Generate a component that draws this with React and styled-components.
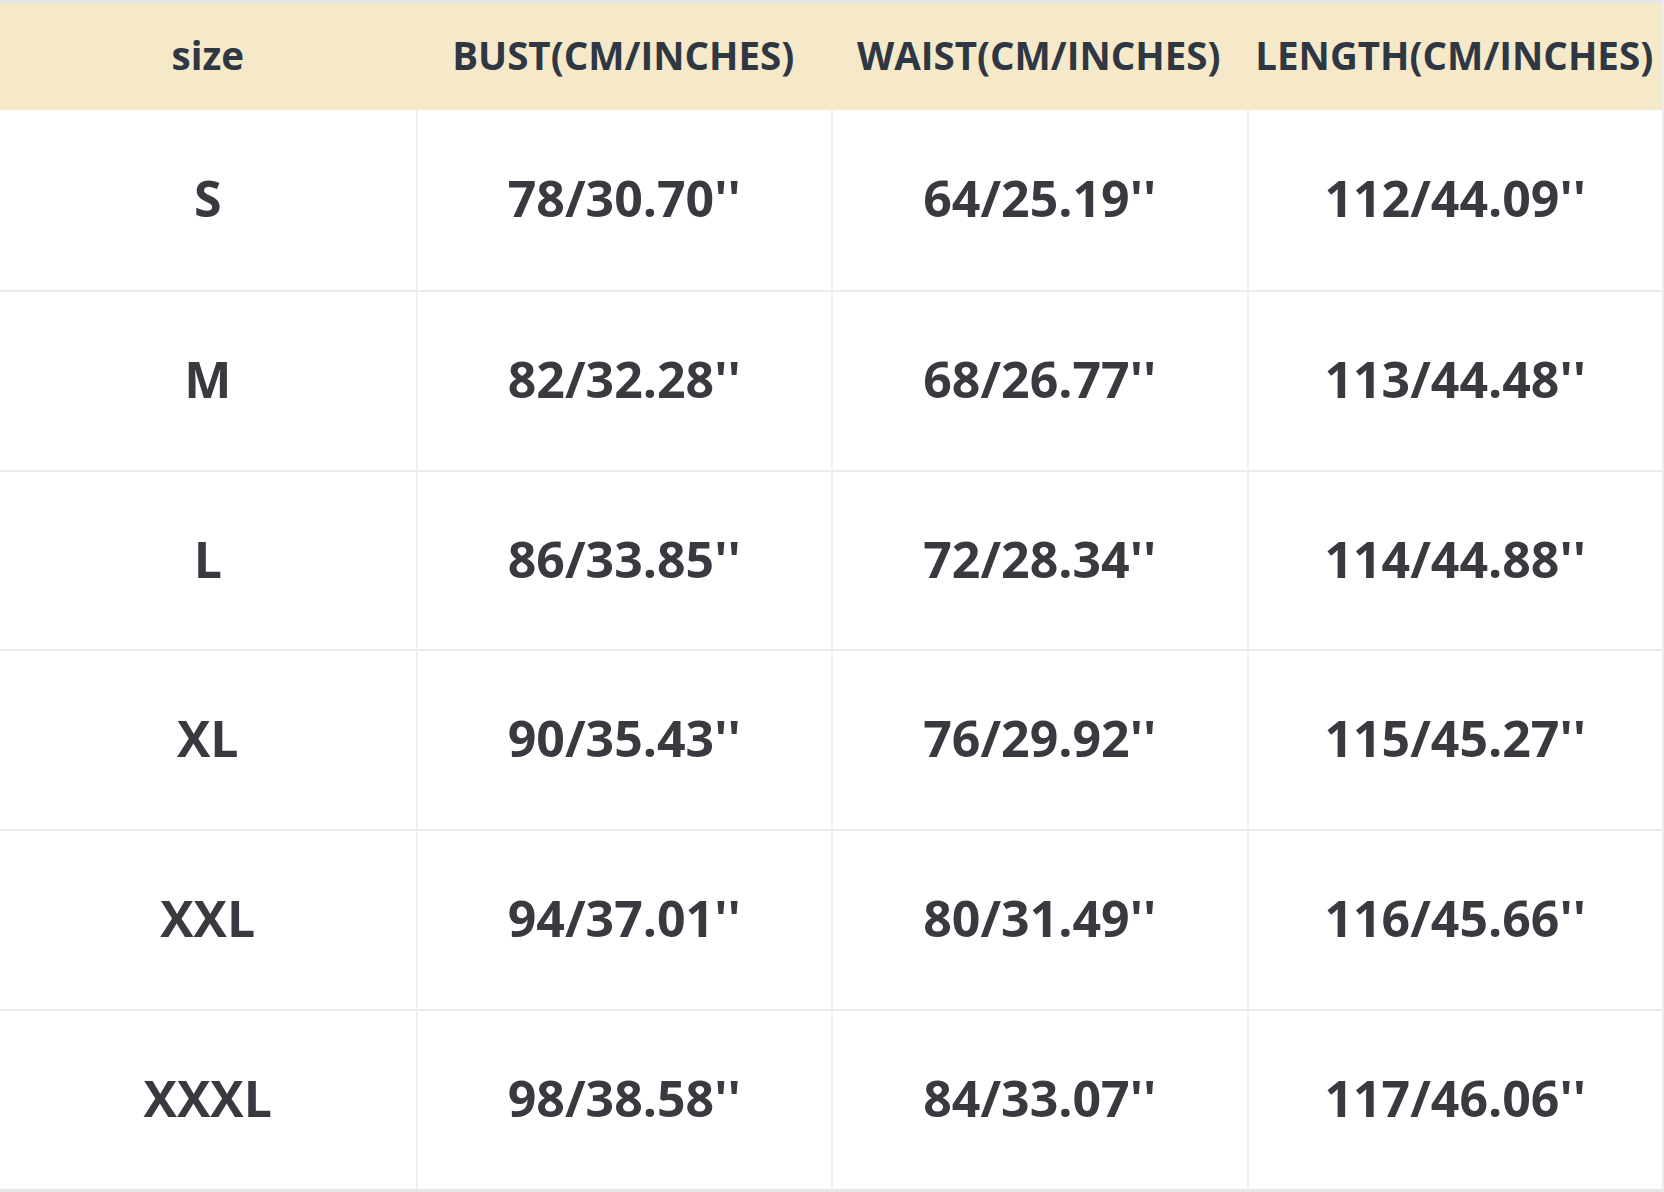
import styled, { createGlobalStyle } from "styled-components"

const GlobalStyle = createGlobalStyle`
    body {
        margin: 0;
        background: #ffffff;
        font-family: "Open Sans", "Noto Sans", sans-serif;
    }
`

const Table = styled.div`
    width: 1664px;
    height: 1192px;
    box-sizing: border-box;
    border-top: 3px solid #e6e6e6;
    border-bottom: 3px solid #e6e6e6;
    border-right: 2px solid #ececec;
    display: grid;
    grid-template-columns: repeat(4, 1fr);
    grid-template-rows: 107px repeat(6, 1fr);
`

const HeadCell = styled.div`
    background: #f5e9c9;
    display: flex;
    align-items: center;
    justify-content: center;
    font-size: 38.5px;
    font-weight: 700;
    color: #2f3742;
    white-space: nowrap;
    padding-bottom: 4px;
`

const Cell = styled.div`
    display: flex;
    align-items: center;
    justify-content: center;
    font-size: 50px;
    font-weight: 700;
    color: #393a3f;
    border-top: ${p => (p.$first ? "none" : "2px solid #ebebeb")};
    border-left: ${p => (p.$col > 0 ? "2px solid #efefef" : "none")};
    padding-bottom: 4px;
`

const headers = ["size", "BUST(CM/INCHES)", "WAIST(CM/INCHES)", "LENGTH(CM/INCHES)"]

const rows = [
    ["S", "78/30.70''", "64/25.19''", "112/44.09''"],
    ["M", "82/32.28''", "68/26.77''", "113/44.48''"],
    ["L", "86/33.85''", "72/28.34''", "114/44.88''"],
    ["XL", "90/35.43''", "76/29.92''", "115/45.27''"],
    ["XXL", "94/37.01''", "80/31.49''", "116/45.66''"],
    ["XXXL", "98/38.58''", "84/33.07''", "117/46.06''"],
]

const App = () => {
    return (
        <>
            <GlobalStyle />
            <Table>
                {headers.map(h => (
                    <HeadCell key={h}>{h}</HeadCell>
                ))}
                {rows.map((row, i) =>
                    row.map((val, j) => (
                        <Cell key={i + "-" + j} $first={i === 0} $col={j}>
                            {val}
                        </Cell>
                    ))
                )}
            </Table>
        </>
    )
}

export default App
